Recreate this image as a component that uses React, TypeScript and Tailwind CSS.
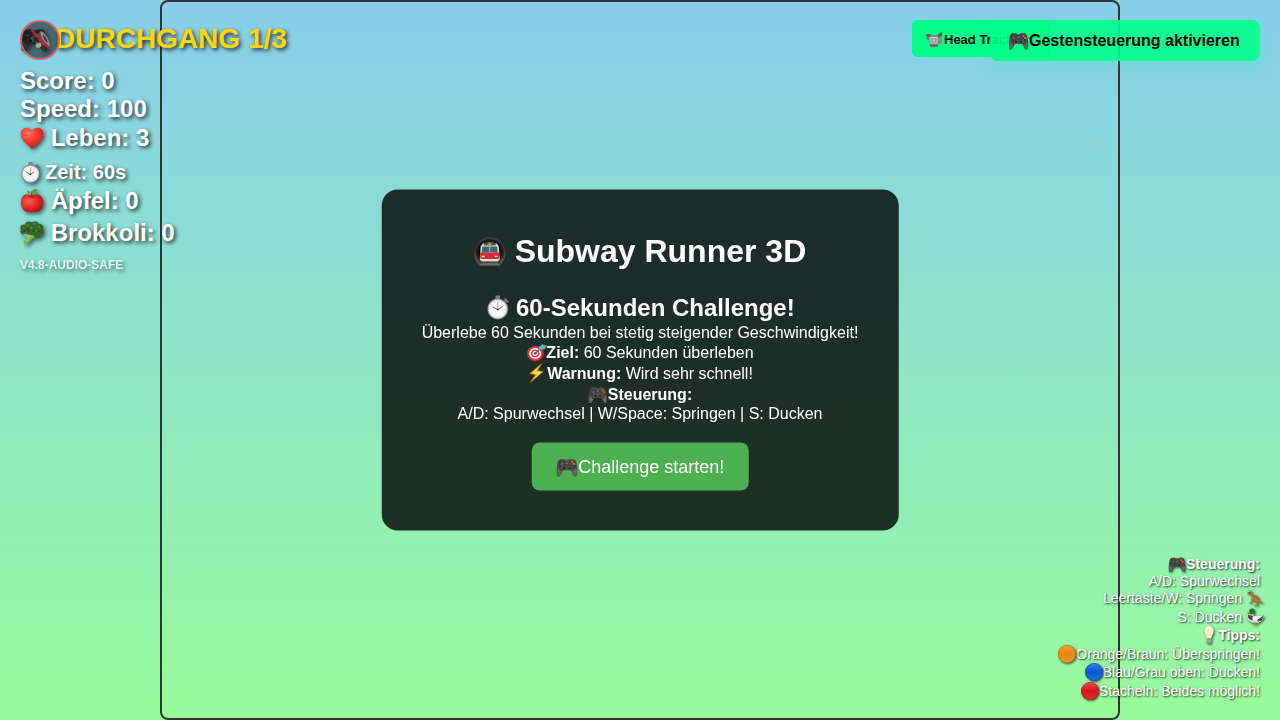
import type { ReactNode } from "react";

type IconProps = { className: string };

function Svg({ className, children }: { className: string; children: ReactNode }) {
  return (
    <svg viewBox="0 0 32 32" className={`block shrink-0 overflow-visible ${className}`} aria-hidden="true">
      {children}
    </svg>
  );
}

function Gamepad({ className }: IconProps) {
  return (
    <Svg className={className}>
      <path d="M8 5h4l2 1h4l2-1h4c4 0 5 3 6 9 1 7 1 15-1 16-3 1-5-4-7-8-1-1-2-1-3-1h-6c-1 0-2 0-3 1-2 4-4 9-7 8C1 29 1 21 2 14 3 8 4 5 8 5z" fill="#454543" />
      <path d="M3 17c1 2 3 5 6 6-2 3-4 8-6 6-1-2-1-7 0-12zM29 17c-1 2-3 5-6 6 2 3 4 8 6 6 1-2 1-7 0-12z" fill="#666664" />
      <path d="M7 6c3-1 5-1 7 1h4c2-2 4-2 7-1" fill="none" stroke="#686864" />
      <circle cx="9" cy="12" r="4" fill="#343637" />
      <path d="M9 9v6M6 12h6" stroke="#6c7579" strokeWidth="1.2" />
      <circle cx="23.5" cy="12" r="4" fill="#343230" />
      <circle cx="23.5" cy="9.3" r="1.7" fill="#ed642b" />
      <circle cx="26" cy="12" r="1.6" fill="#ed6b32" />
      <circle cx="21" cy="12" r="1" fill="#65777f" />
      <circle cx="23.5" cy="14.6" r="1" fill="#6e7364" />
      <circle cx="12" cy="18" r="2.8" fill="#2a2a2a" stroke="#777773" strokeWidth=".8" />
      <circle cx="20" cy="18" r="2.8" fill="#2a2a2a" stroke="#777773" strokeWidth=".8" />
      <path d="M14 11h4" stroke="#858580" />
    </Svg>
  );
}

function Heart({ className }: IconProps) {
  return (
    <Svg className={className}>
      <defs>
        <radialGradient id="heart" cx=".35" cy=".25" r=".8">
          <stop stopColor="#ff7a67" /><stop offset=".45" stopColor="#fa3a2c" /><stop offset="1" stopColor="#cc160f" />
        </radialGradient>
      </defs>
      <path d="M16 31C12 25 1 20 1 10 1 1 13 0 16 7 19 0 31 1 31 10c0 10-11 15-15 21z" fill="url(#heart)" />
    </Svg>
  );
}

function Stopwatch({ className }: IconProps) {
  return (
    <Svg className={className}>
      <path d="M13 0h6v6h-6z" fill="#7c8287" />
      <path d="M25 4l5 5M27 7l-4 4" stroke="#6c7176" strokeWidth="3" />
      <circle cx="16" cy="18" r="14" fill="#73797e" />
      <circle cx="16" cy="18" r="13.2" fill="#b5babe" />
      <circle cx="16" cy="18" r="11.8" fill="#f7f7f5" />
      <circle cx="16" cy="18" r="9.6" fill="none" stroke="#777" strokeWidth="1" strokeDasharray=".8 4.22" />
      <path d="M16 19V9" stroke="#df7167" strokeWidth="1" />
      <path d="M9 15l7 4 6-4" fill="none" stroke="#4c4c4c" strokeWidth="1.2" />
      <circle cx="16" cy="18.5" r="1.2" fill="#333" />
    </Svg>
  );
}

function Apple({ className }: IconProps) {
  return (
    <Svg className={className}>
      <defs>
        <radialGradient id="apple" cx=".35" cy=".4" r=".7">
          <stop stopColor="#ff5a4c" /><stop offset=".55" stopColor="#e32922" /><stop offset="1" stopColor="#a90f10" />
        </radialGradient>
      </defs>
      <path d="M14 8C7 5 1 9 1 18c0 8 6 13 11 13 3-1 5-1 8 0 5 0 11-5 11-13C31 9 24 5 18 8z" fill="url(#apple)" />
      <path d="M11 8.500q5 3 10 0-2 3.500-5 3-3 .5-5-3z" fill="#a51916" />
      <path d="M16 10q-1-4 0-7" fill="none" stroke="#714522" strokeWidth="1.500" />
      <path d="M15 6c1-5 4-7 8-6 0 4-3 7-8 6zM14 6c-3 0-4-1-5-3 3-1 5 0 5 3z" fill="#55a43b" />
    </Svg>
  );
}

function Broccoli({ className }: IconProps) {
  return (
    <Svg className={className}>
      <path d="M12 14l-2 8-6 6 5 4 7-8 8-4 3-5-9 2z" fill="#7dab4c" />
      <path d="M8 28l6-9 9-3M6 18l6 3" stroke="#a1c967" strokeWidth="2" fill="none" />
      <g fill="#35672b">
        <circle cx="5" cy="9" r="4.5" /><circle cx="4" cy="14" r="3.5" /><circle cx="12" cy="6" r="5.5" />
        <circle cx="20" cy="6" r="5.500" /><circle cx="26" cy="9" r="5" /><circle cx="28" cy="15" r="4" />
        <circle cx="23" cy="18" r="5" /><circle cx="16" cy="11" r="8" />
      </g>
      <g fill="#528538">
        <circle cx="10" cy="5" r="1.6" /><circle cx="19" cy="4" r="1.6" /><circle cx="15" cy="9" r="1.6" />
        <circle cx="5" cy="9" r="1.5" /><circle cx="25" cy="8" r="1.6" /><circle cx="21" cy="13" r="1.6" />
      </g>
      <path d="M9 10l3 3M17 14l3-2M24 13l3 2M5 14l2-2" stroke="#1c4823" strokeWidth="2" />
    </Svg>
  );
}

function Metro({ className }: IconProps) {
  return (
    <Svg className={className}>
      <defs>
        <radialGradient id="tunnel">
          <stop offset=".6" stopColor="#030303" /><stop offset=".85" stopColor="#202020" /><stop offset="1" stopColor="#4b4b4b" />
        </radialGradient>
      </defs>
      <path d="M6 31C-4 24 0 3 16 3s20 21 10 28z" fill="url(#tunnel)" />
      <path d="M5 31l4-3h14l4 3z" fill="#6d6962" />
      <path d="M9 9q7-2 14 0l2 3 1 13-2 2H8l-2-2 1-13z" fill="#e4dfd0" />
      <path d="M6.500 18h19v5.500l-2 1.500h-15l-2-1.500z" fill="#d92932" />
      <path d="M8.500 12h15l.5 6h-16z" fill="#3f6675" />
      <path d="M16 12v6" stroke="#cfcbbd" strokeWidth=".8" />
      <path d="M10 8.500h12v2.500H10z" fill="#55534b" />
      <path d="M14.500 9.700h3" stroke="#eeb43d" strokeWidth="1.300" />
      <path d="M8 22h3M21 22h3" stroke="#fff3b0" strokeWidth="1.300" />
      <path d="M8 25.500h16" stroke="#e7dfd0" strokeWidth="2" />
    </Svg>
  );
}

function Target({ className }: IconProps) {
  return (
    <Svg className={className}>
      <ellipse cx="14" cy="18" rx="13.500" ry="12.500" fill="#a81c27" />
      <ellipse cx="13.500" cy="17.500" rx="12.500" ry="11.500" fill="#e5383f" />
      <ellipse cx="13.500" cy="17.500" rx="9.500" ry="8.600" fill="#fff" />
      <ellipse cx="13.500" cy="17.500" rx="7" ry="6.300" fill="#e23842" />
      <ellipse cx="13.500" cy="17.500" rx="4.400" ry="3.900" fill="#fff" />
      <circle cx="13.500" cy="17.500" r="2.200" fill="#d9303b" />
      <path d="M13 18L26 6" stroke="#31677c" strokeWidth="2" />
      <path d="M19 7l7-5 1 2 6 1-5 6-8 1z" fill="#43b7cc" />
    </Svg>
  );
}

function Bolt({ className }: IconProps) {
  return (
    <Svg className={className}>
      <path d="M24 0L5 16l9 2-8 12 20-17-9-2z" fill="#f7b51d" stroke="#d98510" strokeWidth=".8" />
      <path d="M21 3L9 15l8 2-4 7 10-10-9-2z" fill="#ffe354" />
    </Svg>
  );
}

function Camera({ className }: IconProps) {
  return (
    <Svg className={className}>
      <path d="M1 6h7l2 2h13l6-4 1 18-7 3v4l-13 2-3-3-1-10-5-3z" fill="#777977" />
      <path d="M6 11h17v14H7z" fill="#b0b0ab" />
      <path d="M22 7l8-5v7l-7 3z" fill="#555b5c" />
      <path d="M24 12l6-2v10l-6 3z" fill="#8c8f8d" />
      <path d="M1 6h7v5H1z" fill="#585d5e" />
      <circle cx="15" cy="18" r="4" fill="#8b918d" />
      <circle cx="15" cy="18" r="2.300" fill="#c9c8be" />
      <path d="M8 27h14" stroke="#5e635f" strokeWidth="2.500" />
      <path d="M8 12.500h13" stroke="#d8d7ce" strokeWidth="1.500" />
    </Svg>
  );
}

function Kangaroo({ className }: IconProps) {
  return (
    <Svg className={className}>
      <path d="M4 0l3 3 2-3 1 5c1 2 2 3 2 5 6-1 10 2 12 7 1 5 3 7 8 7v2c-4 1-7-1-9-3-2 2-2 5 0 6l-1 3h-8l1-2 5-1-3-6-5-3-1 4-5 4-1-2 4-4V10L5 9 1 8V5l4-1z" fill="#ae713a" />
      <path d="M9 8l3 10 4 3" stroke="#c08b50" strokeWidth="1.500" fill="none" />
      <path d="M17 12q5 2 6 8" stroke="#89562b" strokeWidth="1.500" fill="none" />
      <circle cx="5" cy="5.500" r="1" fill="#302317" />
    </Svg>
  );
}

function Duck({ className }: IconProps) {
  return (
    <Svg className={className}>
      <path d="M4 12c5 1 7 0 12 3l16-1c-2 9-8 14-18 12C5 25 0 20 4 12z" fill="#dededd" />
      <path d="M4 12c6 0 8 1 9 4l-2 6-5-2c-3-2-3-5-2-8z" fill="#62443e" />
      <path d="M11 17c6-4 11-2 19-3-2 7-9 10-17 7z" fill="#f4f2ec" />
      <path d="M20 21l12-8-4 9-7 2z" fill="#43475e" />
      <path d="M5 11V6c1-7 11-7 11 0 0 3-2 4-2 6z" fill="#277943" />
      <path d="M5 11.500q5 2 9 .500" stroke="#fff" strokeWidth="1.500" fill="none" />
      <path d="M6 4L0 8l6 1z" fill="#edb925" />
      <circle cx="9" cy="5" r="1" fill="#111" />
      <path d="M16 25v4l-4 1M20 25v5l-3 2" stroke="#dd8f23" strokeWidth="1.500" fill="none" />
    </Svg>
  );
}

function Bulb({ className }: IconProps) {
  return (
    <Svg className={className}>
      <path d="M12 22c0-5-4-7-4-13C8-3 24-3 24 9c0 6-4 8-4 13z" fill="#fff6d0" stroke="#f0df9f" strokeWidth=".5" />
      <path d="M14 21l-1-7 3 2 3-2-1 7" fill="none" stroke="#f5d190" />
      <path d="M12 22h8v7l-2 3h-4l-2-3z" fill="#868b8d" />
      <path d="M12 25h8M12 28h8" stroke="#c7caca" />
    </Svg>
  );
}

function OrangeBall({ className }: IconProps) {
  return (
    <Svg className={className}>
      <defs>
        <linearGradient id="orange-ball" x2="0" y2="1"><stop stopColor="#f4a43c" /><stop offset=".5" stopColor="#e98409" /><stop offset="1" stopColor="#f09a25" /></linearGradient>
      </defs>
      <circle cx="16" cy="16" r="15.500" fill="url(#orange-ball)" stroke="#b96c12" />
    </Svg>
  );
}

function BlueBall({ className }: IconProps) {
  return (
    <Svg className={className}>
      <defs>
        <linearGradient id="blue-ball" x2="0" y2="1"><stop stopColor="#3981e9" /><stop offset=".5" stopColor="#0757cf" /><stop offset="1" stopColor="#1d6ee0" /></linearGradient>
      </defs>
      <circle cx="16" cy="16" r="15.500" fill="url(#blue-ball)" stroke="#0b479c" />
    </Svg>
  );
}

function RedBall({ className }: IconProps) {
  return (
    <Svg className={className}>
      <defs>
        <linearGradient id="red-ball" x2="0" y2="1"><stop stopColor="#ee4747" /><stop offset=".5" stopColor="#d91216" /><stop offset="1" stopColor="#e92a2c" /></linearGradient>
      </defs>
      <circle cx="16" cy="16" r="15.500" fill="url(#red-ball)" stroke="#a51519" />
    </Svg>
  );
}

function MuteButton() {
  return (
    <button className="absolute left-5 top-5 flex size-10 items-center justify-center rounded-full border-2 border-[#ff5d68]/80 bg-black/50" aria-label="Audio">
      <Svg className="size-6">
        <path d="M3 13l7-3 8-6c6 2 13 13 11 21l-11-3-4 4-5-2 1-5-4-1z" fill="#4c5356" />
        <path d="M17 4c-2 5 4 17 12 21 1-8-6-18-12-21z" fill="#868c8f" />
        <path d="M20 9c-1 3 3 9 6 11 0-4-3-9-6-11z" fill="#343c42" />
        <path d="M6 13l7-2 2 8-7-1z" fill="#272c2f" />
        <path d="M11 21l6-1 1 4-4 3-4-2z" fill="#a5aaad" />
        <path d="M5 3l23 24" stroke="#cf1c29" strokeWidth="3.200" />
      </Svg>
    </button>
  );
}

const iconShadow = "drop-shadow-[2px_2px_2px_rgba(0,0,0,0.6)]";
const tipShadow = "drop-shadow-[1px_1px_1px_rgba(0,0,0,0.65)]";

function Hud() {
  return (
    <section className="absolute left-5 top-5 flex flex-col whitespace-nowrap text-2xl/[28px] font-bold text-white [text-shadow:2px_2px_4px_rgba(0,0,0,0.8)]">
      <div className="mb-[9px] flex h-[38px] items-center text-[28px]/[38px] text-[#ffd700]">
        <Gamepad className={`mr-[7px] size-7 ${iconShadow}`} />DURCHGANG 1/3
      </div>
      <div>Score: 0</div>
      <div>Speed: 100</div>
      <div className="flex h-[30px] items-center"><Heart className={`mr-[6.7px] size-6 ${iconShadow}`} />Leben: 3</div>
      <div className="mt-2 flex h-[22px] items-center text-xl/[22px]"><Stopwatch className={`mr-[4px] size-[21px] ${iconShadow}`} />Zeit: 60s</div>
      <div className="flex h-9 items-center"><Apple className={`mr-[6.7px] size-6 ${iconShadow}`} />Äpfel: 0</div>
      <div className="flex h-7 items-center"><Broccoli className={`mr-[6.7px] size-6 ${iconShadow}`} />Brokkoli: 0</div>
      <div className="mt-2.5 text-xs/[16px] opacity-70">V4.8-AUDIO-SAFE</div>
    </section>
  );
}

function StartCard() {
  return (
    <section className="absolute left-1/2 top-1/2 flex h-[341px] w-[516.5px] -translate-x-1/2 -translate-y-1/2 transform-gpu flex-col items-center whitespace-nowrap rounded-[16px] bg-black/80 p-10 text-base/[20px] text-white">
      <h1 className="flex h-[42px] items-center text-[32px]/[42px] font-bold"><Metro className="mr-[8.9px] size-8" />Subway Runner 3D</h1>
      <h2 className="mb-px mt-[22px] flex h-7 items-center text-2xl/[28px] font-bold"><Stopwatch className="mr-[6.7px] size-6" />60-Sekunden Challenge!</h2>
      <p>Überlebe 60 Sekunden bei stetig steigender Geschwindigkeit!</p>
      <p className="flex h-5 items-center"><Target className="size-5" /><b>Ziel:</b>&nbsp;60 Sekunden überleben</p>
      <p className="flex h-[22px] items-center"><Bolt className="size-5" /><b>Warnung:</b>&nbsp;Wird sehr schnell!</p>
      <p className="flex h-5 items-center"><Gamepad className="size-5" /><b>Steuerung:</b></p>
      <p className="leading-[18px]">A/D: Spurwechsel | W/Space: Springen | S: Ducken</p>
      <button className="mt-5 flex h-12 w-[217px] items-center justify-center rounded-lg bg-[#4caf50] text-lg/[20px]">
        <Gamepad className="size-[22.5px]" />Challenge starten!
      </button>
    </section>
  );
}

function Help() {
  return (
    <aside className="absolute right-5 top-[555px] flex flex-col items-end whitespace-nowrap text-sm/[16px] text-white [text-shadow:1px_1px_2px_rgba(0,0,0,0.8)]">
      <div className="flex h-[18px] items-center font-bold"><Gamepad className={`size-[18px] ${tipShadow}`} />Steuerung:</div>
      <div className="h-4">A/D: Spurwechsel</div>
      <div className="-mr-1 flex h-[18px] items-center">Leertaste/W: Springen<Kangaroo className={`ml-1 h-4 w-[18px] ${tipShadow}`} /></div>
      <div className="-mr-1 flex h-5 items-center">S: Ducken<Duck className={`ml-1 size-[18px] ${tipShadow}`} /></div>
      <div className="flex h-4 items-center font-bold"><Bulb className={`size-[18px] ${tipShadow}`} />Tipps:</div>
      <div className="flex h-[22px] items-center"><OrangeBall className={`size-[18px] ${tipShadow}`} />Orange/Braun: Überspringen!</div>
      <div className="flex h-3.5 items-center"><BlueBall className={`size-[18px] ${tipShadow}`} />Blau/Grau oben: Ducken!</div>
      <div className="flex h-6 items-center"><RedBall className={`size-[18px] ${tipShadow}`} />Stacheln: Beides möglich!</div>
    </aside>
  );
}

export default function App() {
  return (
    <main className="relative flex h-[720px] w-[1280px] justify-center overflow-hidden bg-linear-to-b from-[#87ceeb] to-[#98fb98] font-['Liberation_Sans',Arial,sans-serif]">
      <div className="h-full w-[960px] rounded-lg border-2 border-[#333]" />
      <StartCard />
      <Hud />
      <MuteButton />
      <button className="absolute left-[912px] top-5 flex h-[37px] w-[138px] items-center whitespace-nowrap rounded-[5px] bg-[#00ff88] pl-3.5 pt-0.5 text-[13px] font-bold text-black">
        <Camera className="mr-px size-[17px]" />Head Tracking
      </button>
      <button className="absolute right-5 top-5 flex h-[41px] w-[270px] items-center whitespace-nowrap rounded-lg bg-[#00ff88]/90 pl-[18px] text-base font-bold text-black shadow-[0_4px_15px_rgba(0,255,136,0.2)]">
        <Gamepad className="size-[21px]" />Gestensteuerung aktivieren
      </button>
      <Help />
    </main>
  );
}
